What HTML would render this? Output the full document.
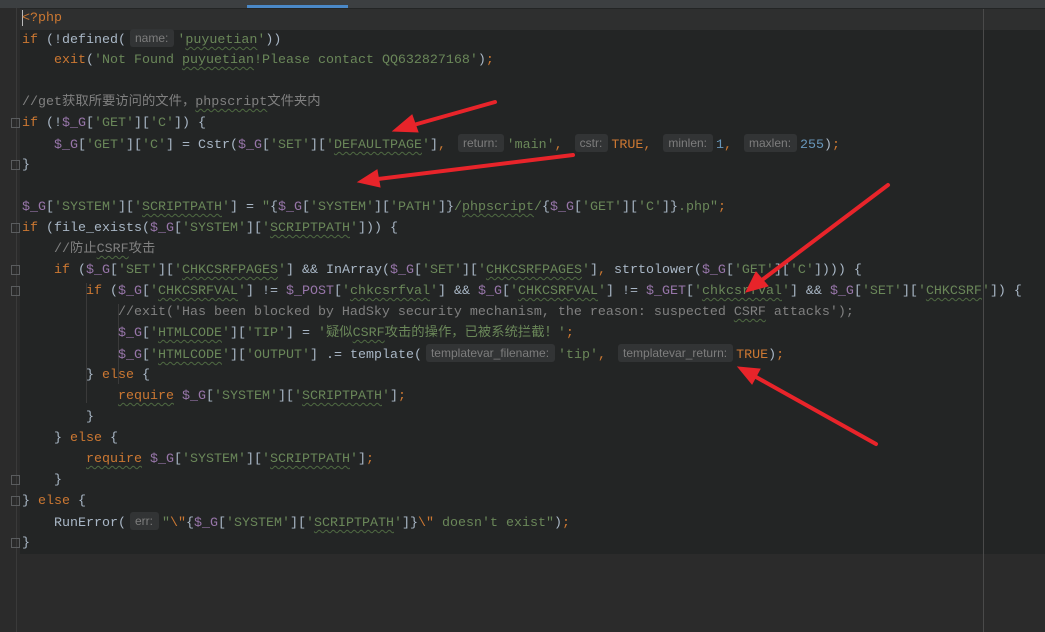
<!DOCTYPE html>
<html><head><meta charset="utf-8"><style>
body{margin:0;width:1045px;height:632px;overflow:hidden;background:#2b2b2b;position:relative;font-family:"Liberation Mono","Noto Sans CJK SC",monospace;font-size:13.33px;color:#a9b7c6}
#top{position:absolute;left:0;top:0;width:1045px;height:8px;background:#3c3f41}
#tab{position:absolute;left:247px;top:5px;width:101px;height:3px;background:#4a88c7}
#code{position:absolute;left:20px;top:8px;width:1025px;height:546px;background:#232525}
#cur{position:absolute;left:20px;top:9px;width:1025px;height:21px;background:#2e2f2f}
#margin{position:absolute;left:983px;top:9px;width:1px;height:623px;background:#4a4a4a}
.l{position:absolute;left:22px;height:21px;line-height:21px;white-space:pre}
.k{color:#cc7832}.s{color:#6a8759}.v{color:#9876aa}.c{color:#808080}.n{color:#6897bb}
.h{display:inline-block;font-family:"Liberation Sans",sans-serif;font-size:12px;color:#7d7d7d;background:#323435;border-radius:3px;padding:0 6px 0 5px;height:18px;line-height:18px;margin:0 3px 0 4px;vertical-align:1px}
.g{position:absolute;width:1px;background:#3a3a3a}
.u{text-decoration:underline wavy #4f6a42;text-decoration-thickness:1px;text-underline-offset:3px}
</style></head><body>
<div id="top"></div><div id="tab"></div>
<div id="code"></div><div id="cur"></div><div id="margin"></div>
<div class="g" style="left:16px;top:8px;height:624px;background:#3a3a3a"></div>
<div class="g" style="left:86px;top:283px;height:120px"></div>
<div class="g" style="left:118px;top:304px;height:80px"></div>
<div style="position:absolute;left:22px;top:10px;width:1px;height:16px;background:#bbb"></div>

<div class="l" style="top:8px"><span class="k">&lt;?php</span></div>
<div class="l" style="top:29px"><span class="k">if</span> (!defined(<span class="h">name:</span><span class="s">'<span class="u">puyuetian</span>'</span>))</div>
<div class="l" style="top:50px">    <span class="k">exit</span>(<span class="s">'Not Found <span class="u">puyuetian</span>!Please contact QQ632827168'</span>)<span class="k">;</span></div>
<div class="l" style="top:92px"><span class="c">//get获取所要访问的文件，<span class="u">phpscript</span>文件夹内</span></div>
<div class="l" style="top:113px"><span class="k">if</span> (!<span class="v">$_G</span>[<span class="s">'GET'</span>][<span class="s">'C'</span>]) {</div>
<div class="l" style="top:134px">    <span class="v">$_G</span>[<span class="s">'GET'</span>][<span class="s">'C'</span>] = Cstr(<span class="v">$_G</span>[<span class="s">'SET'</span>][<span class="s">'<span class="u">DEFAULTPAGE</span>'</span>]<span class="k">,</span> <span class="h">return:</span><span class="s">'main'</span><span class="k">,</span> <span class="h">cstr:</span><span class="k">TRUE,</span> <span class="h">minlen:</span><span class="n">1</span><span class="k">,</span> <span class="h">maxlen:</span><span class="n">255</span>)<span class="k">;</span></div>
<div class="l" style="top:155px">}</div>
<div class="l" style="top:197px"><span class="v">$_G</span>[<span class="s">'SYSTEM'</span>][<span class="s">'<span class="u">SCRIPTPATH</span>'</span>] = <span class="s">"</span>{<span class="v">$_G</span>[<span class="s">'SYSTEM'</span>][<span class="s">'PATH'</span>]}<span class="s">/<span class="u">phpscript</span>/</span>{<span class="v">$_G</span>[<span class="s">'GET'</span>][<span class="s">'C'</span>]}<span class="s">.php"</span><span class="k">;</span></div>
<div class="l" style="top:218px"><span class="k">if</span> (file_exists(<span class="v">$_G</span>[<span class="s">'SYSTEM'</span>][<span class="s">'<span class="u">SCRIPTPATH</span>'</span>])) {</div>
<div class="l" style="top:239px">    <span class="c">//防止<span class="u">CSRF</span>攻击</span></div>
<div class="l" style="top:260px">    <span class="k">if</span> (<span class="v">$_G</span>[<span class="s">'SET'</span>][<span class="s">'<span class="u">CHKCSRFPAGES</span>'</span>] &amp;&amp; InArray(<span class="v">$_G</span>[<span class="s">'SET'</span>][<span class="s">'<span class="u">CHKCSRFPAGES</span>'</span>]<span class="k">,</span> strtolower(<span class="v">$_G</span>[<span class="s">'GET'</span>][<span class="s">'C'</span>]))) {</div>
<div class="l" style="top:281px">        <span class="k">if</span> (<span class="v">$_G</span>[<span class="s">'<span class="u">CHKCSRFVAL</span>'</span>] != <span class="v">$_POST</span>[<span class="s">'<span class="u">chkcsrfval</span>'</span>] &amp;&amp; <span class="v">$_G</span>[<span class="s">'<span class="u">CHKCSRFVAL</span>'</span>] != <span class="v">$_GET</span>[<span class="s">'<span class="u">chkcsrfval</span>'</span>] &amp;&amp; <span class="v">$_G</span>[<span class="s">'SET'</span>][<span class="s">'<span class="u">CHKCSRF</span>'</span>]) {</div>
<div class="l" style="top:302px">            <span class="c">//exit('Has been blocked by HadSky security mechanism, the reason: suspected <span class="u">CSRF</span> attacks');</span></div>
<div class="l" style="top:323px">            <span class="v">$_G</span>[<span class="s">'<span class="u">HTMLCODE</span>'</span>][<span class="s">'TIP'</span>] = <span class="s">'疑似<span class="u">CSRF</span>攻击的操作，已被系统拦截！'</span><span class="k">;</span></div>
<div class="l" style="top:344px">            <span class="v">$_G</span>[<span class="s">'<span class="u">HTMLCODE</span>'</span>][<span class="s">'OUTPUT'</span>] .= template(<span class="h">templatevar_filename:</span><span class="s">'tip'</span><span class="k">,</span> <span class="h">templatevar_return:</span><span class="k">TRUE</span>)<span class="k">;</span></div>
<div class="l" style="top:365px">        } <span class="k">else</span> {</div>
<div class="l" style="top:386px">            <span class="k u">require</span> <span class="v">$_G</span>[<span class="s">'SYSTEM'</span>][<span class="s">'<span class="u">SCRIPTPATH</span>'</span>]<span class="k">;</span></div>
<div class="l" style="top:407px">        }</div>
<div class="l" style="top:428px">    } <span class="k">else</span> {</div>
<div class="l" style="top:449px">        <span class="k u">require</span> <span class="v">$_G</span>[<span class="s">'SYSTEM'</span>][<span class="s">'<span class="u">SCRIPTPATH</span>'</span>]<span class="k">;</span></div>
<div class="l" style="top:470px">    }</div>
<div class="l" style="top:491px">} <span class="k">else</span> {</div>
<div class="l" style="top:512px">    RunError(<span class="h">err:</span><span class="s">"<span class="k">\"</span></span>{<span class="v">$_G</span>[<span class="s">'SYSTEM'</span>][<span class="s">'<span class="u">SCRIPTPATH</span>'</span>]}<span class="s"><span class="k">\"</span> doesn't exist"</span>)<span class="k">;</span></div>
<div class="l" style="top:533px">}</div>

<svg width="1045" height="632" style="position:absolute;left:0;top:0">
<g fill="none" stroke="#5a5c5e" stroke-width="1">
<rect x="11.5" y="118.5" width="8" height="9"/><rect x="11.5" y="223.5" width="8" height="9"/><rect x="11.5" y="265.5" width="8" height="9"/><rect x="11.5" y="286.5" width="8" height="9"/><rect x="11.5" y="160.5" width="8" height="9"/><rect x="11.5" y="475.5" width="8" height="9"/><rect x="11.5" y="496.5" width="8" height="9"/><rect x="11.5" y="538.5" width="8" height="9"/>
</g>
<g stroke="#e8242a" stroke-width="4" stroke-linecap="round" fill="#e8242a">
<line x1="495" y1="102" x2="410" y2="126"/><polygon points="393,131 412,115 418,132" stroke-width="1"/>
<line x1="573" y1="155" x2="378" y2="179"/><polygon points="358,182 377,170 380,187" stroke-width="1"/>
<line x1="888" y1="185" x2="762" y2="280"/><polygon points="746,292 756,272 768,286" stroke-width="1"/>
<line x1="876" y1="444" x2="756" y2="377"/><polygon points="738,367 760,369 752,384" stroke-width="1"/>
</g>
</svg>
</body></html>
